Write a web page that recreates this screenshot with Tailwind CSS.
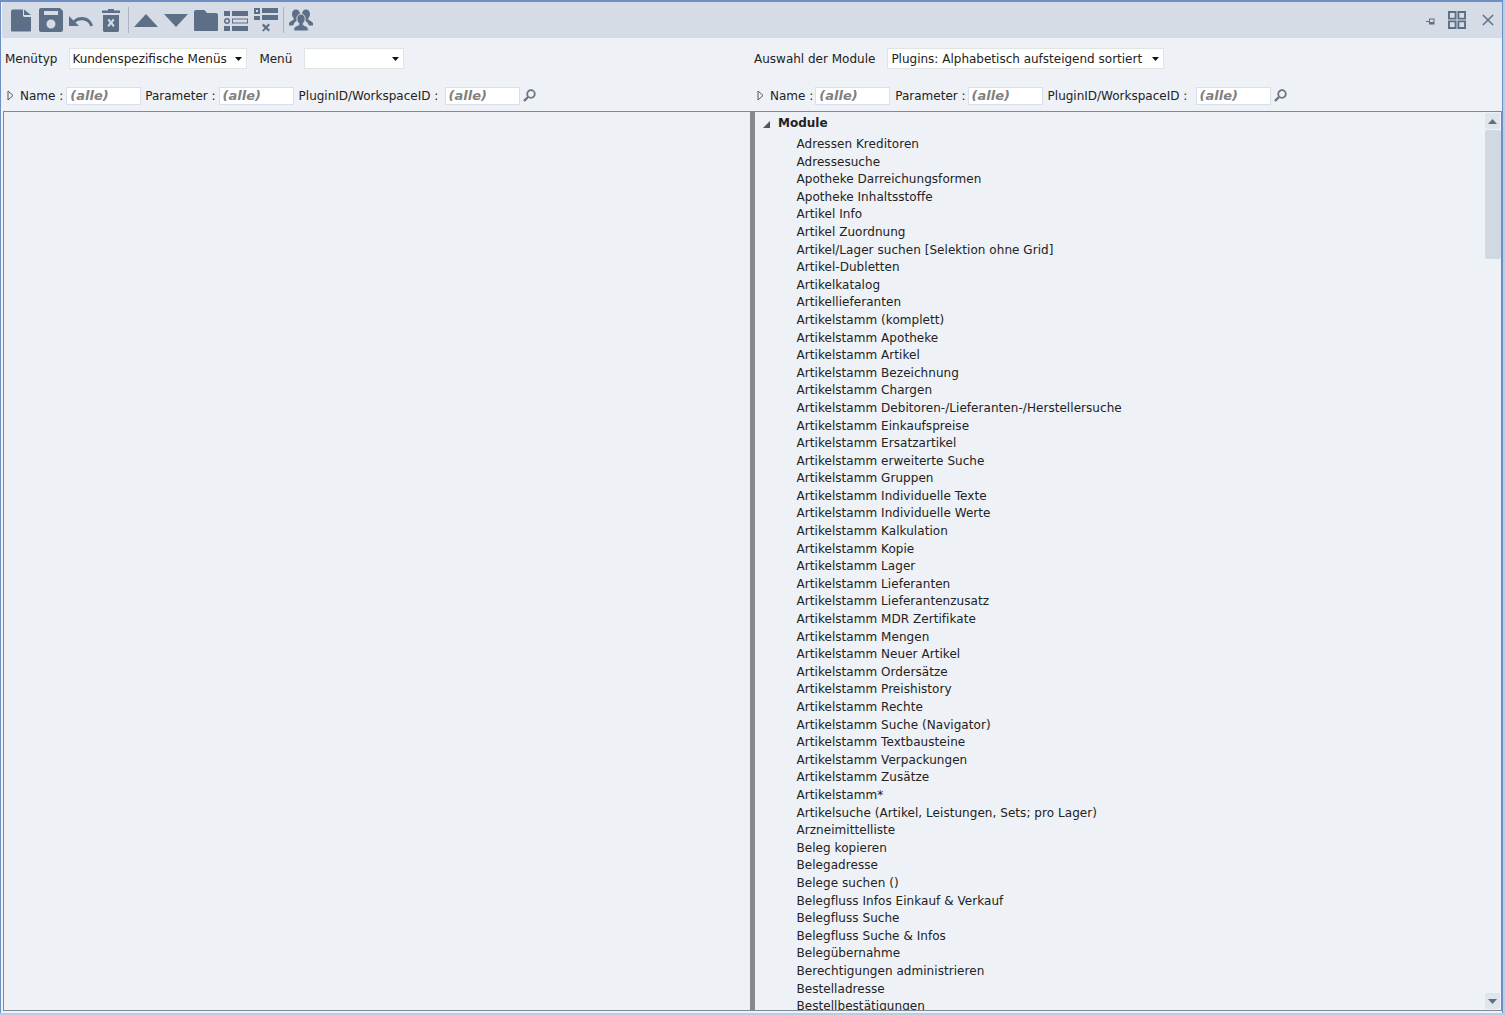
<!DOCTYPE html>
<html lang="de">

<head>
    <meta charset="UTF-8" />
    <title>Menüs</title>
    <script src="https://cdn.jsdelivr.net/npm/@tailwindcss/browser@4"></script>
</head>

<body class="h-screen overflow-hidden bg-[#bccbe3] font-['DejaVu_Sans',sans-serif] text-[12px] text-[#222]">
    <div class="w-[1503px] h-[1013px] flex flex-col bg-[#eef1f6] border-t-2 border-x border-[#6f8fc4]">
        <!-- toolbar -->
        <header class="h-9 shrink-0 ml-px flex items-center gap-[6px] pl-[7px] bg-[#d5dce6] text-[#5d6f87]">
            <svg class="w-6 h-6" viewBox="0 0 24 24" fill="currentColor"><path d="M4 1.500C2.900 1.500 2 2.400 2 3.500v19c0 .6.500 1 1 1h18c.6 0 1-.4 1-1V9h-6.500c-.8 0-1.500-.7-1.500-1.500V1.500zM15 1.500V7h7z"/></svg>
            <svg class="w-6 h-6" viewBox="0 0 24 24" fill="currentColor" fill-rule="evenodd"><path d="M2 0h19l3 3v19c0 1.100-.9 2-2 2H2c-1.100 0-2-.9-2-2V2C0 .9.900 0 2 0zM5 3v4h14V3zM12 11.500a4.500 4.500 0 1 0 0 9 4.500 4.500 0 0 0 0-9z"/></svg>
            <svg class="w-6 h-6" viewBox="0 0 24 24" fill="currentColor"><path d="M0 8v10h10l-3.500-3.500C8.300 13 10.400 12.200 12.800 12.200c4 0 7.300 2.200 8.500 6.300l2.700-.9C22.500 12.400 18.200 9 12.800 9 9.600 9 6.600 10.200 4.400 12.400z"/></svg>
            <svg class="w-6 h-6" viewBox="0 0 24 24" fill="currentColor" fill-rule="evenodd"><path d="M3 2.500h6V1h6v1.500h6V5H3zM4 7h16v15.500c0 .8-.7 1.500-1.500 1.500h-13C4.700 24 4 23.300 4 22.500zM8.500 12l2 2.800-2.200 3 1.700 1.200 2-2.700 2 2.700 1.700-1.200-2.200-3 2-2.800-1.700-1.200-1.800 2.500-1.800-2.500z"/></svg>
            <div class="w-px h-[26px] -mx-px bg-[#aab4c2]"></div>
            <svg class="w-6 h-6" viewBox="0 0 24 24" fill="currentColor"><path d="M12 6l12 13H0z"/></svg>
            <svg class="w-6 h-6" viewBox="0 0 24 24" fill="currentColor"><path d="M0 6h24L12 19z"/></svg>
            <svg class="w-6 h-6" viewBox="0 0 24 24" fill="currentColor"><path d="M2 2h7.500c1 0 1.500.5 2 1.200L13 5h9c1.100 0 2 .9 2 2v15c0 .6-.5 1-1 1H1c-.6 0-1-.4-1-1V4c0-1.100.9-2 2-2z"/></svg>
            <svg class="w-6 h-6" viewBox="0 0 24 24" fill="currentColor" fill-rule="evenodd"><path d="M0 3h6v5H0zM8 3h16v5H8zM0 18h6v5H0zM8 18h16v5H8zM8 10.500h16v5H8zM9 11.500v3h14v-3zM3 10a3 3 0 1 0 0 6 3 3 0 0 0 0-6zM3 11.500a1.500 1.500 0 1 1 0 3 1.500 1.500 0 0 1 0-3z"/></svg>
            <svg class="w-6 h-6" viewBox="0 0 24 24" fill="currentColor" fill-rule="evenodd"><path d="M0 0h6v6H0zM2 2v2h2V2zM8 0h16v5H8zM8 7h16v5H8zM0 8h6v4H0zM9.500 15.500l2.500 2.500 2.500-2.500 1.500 1.500-2.500 2.500 2.500 2.500-1.500 1.500-2.500-2.500-2.500 2.500L8 22.500l2.500-2.500L8 17.500z"/></svg>
            <div class="w-px h-[26px] -mx-px bg-[#aab4c2]"></div>
            <svg class="w-6 h-6" viewBox="0 0 24 24" fill="currentColor"><path d="M7 1.500c2.400 0 4 1.900 4 4.500 0 1.900-.8 3.400-1.800 4.300v1.800c-2.500 1.300-4.500 3-5 5.400H0v-2c0-1.300 2.500-2.800 4.800-3.900v-1.300C3.800 9.400 3 7.900 3 6c0-2.600 1.600-4.500 4-4.500zM17 1.500c2.400 0 4 1.900 4 4.500 0 1.900-.8 3.400-1.800 4.300v1.300c2.300 1.100 4.800 2.600 4.800 3.900v2h-4.200c-.5-2.400-2.500-4.100-5-5.400v-1.800C13.800 9.400 13 7.900 13 6c0-2.600 1.600-4.500 4-4.500z"/><path d="M12 6c2.500 0 4.200 2 4.200 4.700 0 2-.9 3.500-2 4.500v1.600c2.600 1.100 5 2.500 5 3.900V23H4.800v-2.300c0-1.400 2.400-2.800 5-3.900v-1.600c-1.100-1-2-2.500-2-4.500C7.800 8 9.500 6 12 6z" stroke="#d5dce6" stroke-width="1"/></svg>
            <div class="ml-auto flex items-center text-[#5d6f87]">
                <svg class="w-[9px] h-[9px] mr-[13px] mt-[2px]" viewBox="0 0 9 9" fill="currentColor"><path d="M0 4h3V1.500h5.500v6H3V5H0zM4 2.500v2.500h3.500V2.500z"/></svg>
                <svg class="w-[18px] h-[18px] mr-[16px]" viewBox="0 0 19 19" fill="none" stroke="currentColor" stroke-width="2"><path d="M1 1h7v7H1zM11 1h7v7h-7zM1 11h7v7H1zM11 11h7v7h-7z"/></svg>
                <svg class="w-3 h-3 mr-[8px]" viewBox="0 0 13 13" fill="none" stroke="currentColor" stroke-width="1.600"><path d="M1 1l11 11M12 1L1 12"/></svg>
            </div>
        </header>

        <!-- filter rows -->
        <div class="h-[73px] shrink-0 ml-px grid grid-cols-[750px_1fr]">
            <div class="flex flex-col">
                <div class="h-10 flex items-center pl-[3px] pt-[1px]">
                    <span>Menütyp</span>
                    <div class="ml-[12px] w-[178px] h-[21px] bg-white border border-[#dfe5e3] flex items-center justify-between pl-[2px] pr-[4px]">
                        <span>Kundenspezifische Menüs</span>
                        <svg class="w-[7px] h-[4px]" viewBox="0 0 7 4" fill="#111"><path d="M0 0h7L3.500 4z"/></svg>
                    </div>
                    <span class="ml-[12px]">Menü</span>
                    <div class="ml-[12px] w-[100px] h-[21px] bg-white border border-[#dfe5e3] flex items-center justify-end pr-[4px]">
                        <svg class="w-[7px] h-[4px]" viewBox="0 0 7 4" fill="#111"><path d="M0 0h7L3.500 4z"/></svg>
                    </div>
                </div>
                <div class="flex-1 flex items-center pl-[5px] pt-[2px]">
                    <svg class="w-[7px] h-[11px] mr-[6px]" viewBox="0 0 7 11" fill="none" stroke="#555"><path d="M1 1l5 4.500L1 10z"/></svg>
                    <span>Name :</span>
                    <div class="ml-[3px] w-[75px] h-[18px] bg-white border border-[#d7dfec] pl-[3px] flex items-center text-[#808080] italic font-bold text-[13px]">(alle)</div>
                    <span class="ml-[4px]">Parameter :</span>
                    <div class="ml-[3px] w-[75px] h-[18px] bg-white border border-[#d7dfec] pl-[3px] flex items-center text-[#808080] italic font-bold text-[13px]">(alle)</div>
                    <span class="ml-[5px] w-[145px] whitespace-nowrap">PluginID/WorkspaceID :</span>
                    <div class="ml-[1px] w-[75px] h-[18px] bg-white border border-[#d7dfec] pl-[3px] flex items-center text-[#808080] italic font-bold text-[13px]">(alle)</div>
                    <svg class="ml-[3px] w-[13px] h-[13px]" viewBox="0 0 13 13" fill="none" stroke="#6b7480" stroke-width="1.800"><circle cx="8" cy="5" r="3.800"/><path d="M5 8l-4 4" stroke-width="2.400"/></svg>
                </div>
            </div>
            <div class="flex flex-col">
                <div class="h-10 flex items-center pl-[2px] pt-[1px]">
                    <span>Auswahl der Module</span>
                    <div class="ml-[12px] w-[277px] h-[21px] bg-white border border-[#dfe5e3] flex items-center justify-between pl-[3px] pr-[4px]">
                        <span>Plugins: Alphabetisch aufsteigend sortiert</span>
                        <svg class="w-[7px] h-[4px]" viewBox="0 0 7 4" fill="#111"><path d="M0 0h7L3.500 4z"/></svg>
                    </div>
                </div>
                <div class="flex-1 flex items-center pl-[5px] pt-[2px]">
                    <svg class="w-[7px] h-[11px] mr-[6px]" viewBox="0 0 7 11" fill="none" stroke="#555"><path d="M1 1l5 4.500L1 10z"/></svg>
                    <span>Name :</span>
                    <div class="ml-[2px] w-[75px] h-[18px] bg-white border border-[#d7dfec] pl-[3px] flex items-center text-[#808080] italic font-bold text-[13px]">(alle)</div>
                    <span class="ml-[5px]">Parameter :</span>
                    <div class="ml-[2px] w-[75px] h-[18px] bg-white border border-[#d7dfec] pl-[3px] flex items-center text-[#808080] italic font-bold text-[13px]">(alle)</div>
                    <span class="ml-[5px] w-[145px] whitespace-nowrap">PluginID/WorkspaceID :</span>
                    <div class="ml-[3px] w-[75px] h-[18px] bg-white border border-[#d7dfec] pl-[3px] flex items-center text-[#808080] italic font-bold text-[13px]">(alle)</div>
                    <svg class="ml-[3px] w-[13px] h-[13px]" viewBox="0 0 13 13" fill="none" stroke="#6b7480" stroke-width="1.800"><circle cx="8" cy="5" r="3.800"/><path d="M5 8l-4 4" stroke-width="2.400"/></svg>
                </div>
            </div>
        </div>

        <!-- panels -->
        <div class="flex-1 min-h-0 ml-[2px] mb-[2px] flex border border-[#808a96]">
            <div class="w-[746px] shrink-0"></div>
            <div class="w-[5px] shrink-0 bg-[#85888c]"></div>
            <div class="flex-1 min-w-0 relative overflow-hidden">
                <div class="flex items-center h-[21px] pl-[8px] font-bold">
                    <svg class="w-[7px] h-[7px] mr-[8px] mt-[3px]" viewBox="0 0 7 7" fill="#555"><path d="M7 0v7H0z"/></svg>
                    <span>Module</span>
                </div>
                <ul class="pt-[3px] pl-[41.500px] tracking-[0.05px] [&>li]:h-[17.600px] [&>li]:leading-[17.600px] [&>li]:whitespace-nowrap">
                    <li>Adressen Kreditoren</li>
                    <li>Adressesuche</li>
                    <li>Apotheke Darreichungsformen</li>
                    <li>Apotheke Inhaltsstoffe</li>
                    <li>Artikel Info</li>
                    <li>Artikel Zuordnung</li>
                    <li>Artikel/Lager suchen [Selektion ohne Grid]</li>
                    <li>Artikel-Dubletten</li>
                    <li>Artikelkatalog</li>
                    <li>Artikellieferanten</li>
                    <li>Artikelstamm (komplett)</li>
                    <li>Artikelstamm Apotheke</li>
                    <li>Artikelstamm Artikel</li>
                    <li>Artikelstamm Bezeichnung</li>
                    <li>Artikelstamm Chargen</li>
                    <li>Artikelstamm Debitoren-/Lieferanten-/Herstellersuche</li>
                    <li>Artikelstamm Einkaufspreise</li>
                    <li>Artikelstamm Ersatzartikel</li>
                    <li>Artikelstamm erweiterte Suche</li>
                    <li>Artikelstamm Gruppen</li>
                    <li>Artikelstamm Individuelle Texte</li>
                    <li>Artikelstamm Individuelle Werte</li>
                    <li>Artikelstamm Kalkulation</li>
                    <li>Artikelstamm Kopie</li>
                    <li>Artikelstamm Lager</li>
                    <li>Artikelstamm Lieferanten</li>
                    <li>Artikelstamm Lieferantenzusatz</li>
                    <li>Artikelstamm MDR Zertifikate</li>
                    <li>Artikelstamm Mengen</li>
                    <li>Artikelstamm Neuer Artikel</li>
                    <li>Artikelstamm Ordersätze</li>
                    <li>Artikelstamm Preishistory</li>
                    <li>Artikelstamm Rechte</li>
                    <li>Artikelstamm Suche (Navigator)</li>
                    <li>Artikelstamm Textbausteine</li>
                    <li>Artikelstamm Verpackungen</li>
                    <li>Artikelstamm Zusätze</li>
                    <li>Artikelstamm*</li>
                    <li>Artikelsuche (Artikel, Leistungen, Sets; pro Lager)</li>
                    <li>Arzneimittelliste</li>
                    <li>Beleg kopieren</li>
                    <li>Belegadresse</li>
                    <li>Belege suchen ()</li>
                    <li>Belegfluss Infos Einkauf &amp; Verkauf</li>
                    <li>Belegfluss Suche</li>
                    <li>Belegfluss Suche &amp; Infos</li>
                    <li>Belegübernahme</li>
                    <li>Berechtigungen administrieren</li>
                    <li>Bestelladresse</li>
                    <li>Bestellbestätigungen</li>
                </ul>
                <!-- scrollbar -->
                <div class="absolute top-0 right-0 bottom-0 w-[17px] bg-[#eef1f6] flex flex-col items-center">
                    <div class="w-[15px] h-[16px] mt-[1px] bg-[#dfe5ed] rounded-[2px] flex items-center justify-center">
                        <svg class="w-[9px] h-[5px]" viewBox="0 0 9 5" fill="#5d6f87"><path d="M4.500 0L9 5H0z"/></svg>
                    </div>
                    <div class="w-[16px] h-[129px] mt-px bg-[#d0d8e3] rounded-[2px]"></div>
                    <div class="w-[15px] h-[16px] mt-auto mb-[1px] bg-[#dfe5ed] rounded-[2px] flex items-center justify-center">
                        <svg class="w-[9px] h-[5px]" viewBox="0 0 9 5" fill="#5d6f87"><path d="M0 0h9L4.500 5z"/></svg>
                    </div>
                </div>
            </div>
        </div>
    </div>
</body>

</html>
